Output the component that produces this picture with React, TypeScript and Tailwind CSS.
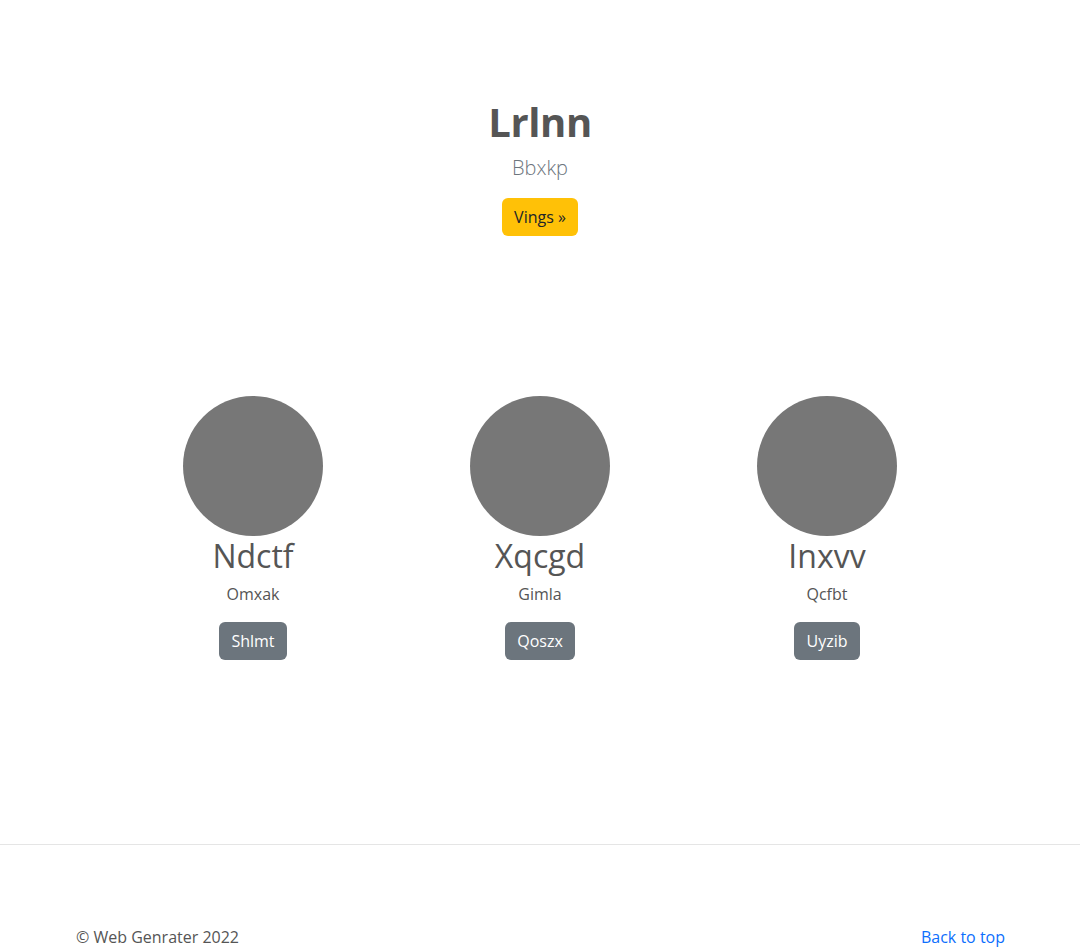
import React from 'react';

const features = [
  { title: 'Ndctf', text: 'Omxak', button: 'Shlmt' },
  { title: 'Xqcgd', text: 'Gimla', button: 'Qoszx' },
  { title: 'Inxvv', text: 'Qcfbt', button: 'Uyzib' }
];

const App = () => {
  return (
    <div className="min-h-[949px] bg-white text-[#555] font-['Open_Sans',sans-serif]">
      {/* Hero */}
      <section className="pt-[98px] flex flex-col items-center text-center">
        <h1 className="text-[40px] leading-[48px] font-bold tracking-[-0.01em] text-[#555]">Lrlnn</h1>
        <p className="mt-[7px] text-[20px] leading-[30px] font-light text-[#6c757d]">Bbxkp</p>
        <button className="mt-[15px] h-[38px] px-3 rounded-[6px] bg-[#ffc107] text-[#212529] text-base">
          Vings »
        </button>
      </section>

      {/* Features */}
      <section className="mt-[160px] mx-auto w-[861px] grid grid-cols-3">
        {features.map((f) => (
          <div key={f.title} className="flex flex-col items-center text-center">
            <div className="w-[140px] h-[140px] rounded-full bg-[#777]" />
            <h2 className="mt-px text-[32px] leading-[38px] font-normal text-[#555]">{f.title}</h2>
            <p className="mt-[7px] text-base leading-6 text-[#555]">{f.text}</p>
            <button className="mt-4 h-[38px] px-3 rounded-[6px] bg-[#6c757d] text-white text-base">
              {f.button}
            </button>
          </div>
        ))}
      </section>

      {/* Footer */}
      <div className="mt-[184px] border-t border-[#e5e5e5]" />
      <footer className="mt-[80px] pl-[76px] pr-[75px] flex justify-between text-base leading-6">
        <p className="text-[#555]">© Web Genrater 2022</p>
        <a href="#" className="text-[#0d6efd]">Back to top</a>
      </footer>
    </div>
  );
};

export default App;
